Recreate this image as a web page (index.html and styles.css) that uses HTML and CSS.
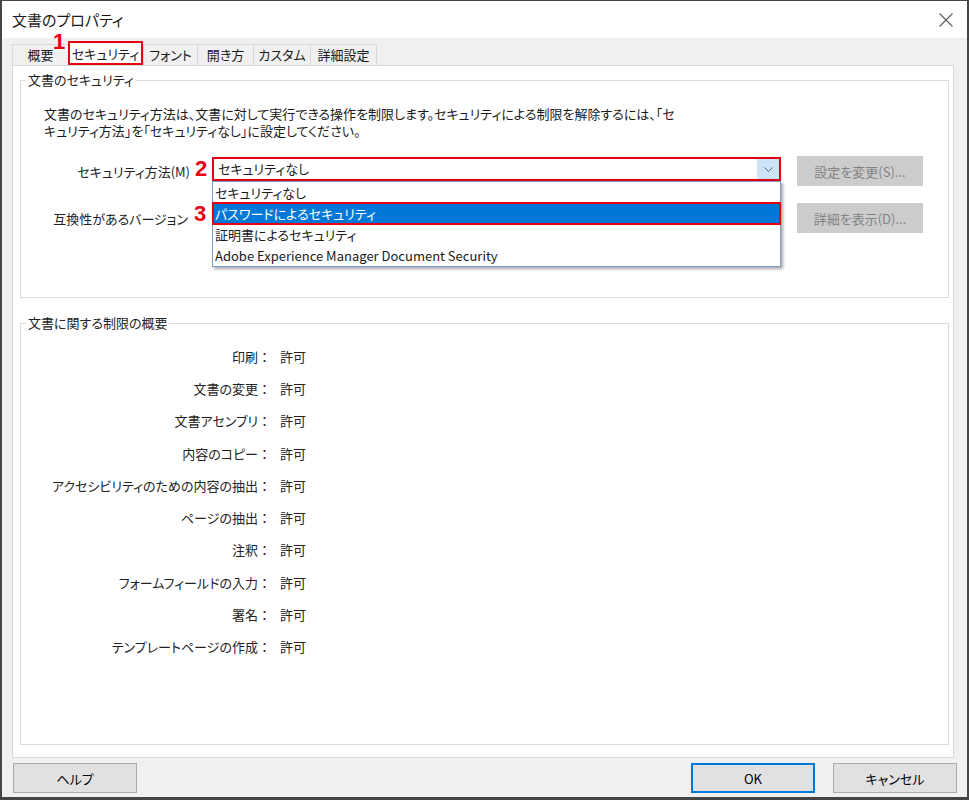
FILE: index.html
```html
<!DOCTYPE html>
<html lang="ja">
<head>
<meta charset="utf-8">
<title>文書のプロパティ</title>
<link rel="stylesheet" href="styles.css">
</head>
<body>
<div class="window">
  <div class="titlebar">
    <span class="title">文書のプロパティ</span>
    <svg class="close" width="14" height="14" viewBox="0 0 14 14"><path d="M0.5 0.5 L13.5 13.5 M13.5 0.5 L0.5 13.5" stroke="#5a5a5a" stroke-width="1.1" fill="none"/></svg>
  </div>
  <div class="tabs">
    <div class="tab tab-w1">概要</div>
    <div class="tab tab-w2 active"><span class="mark mark-1">1</span>セキュリティ</div>
    <div class="tab tab-w3">フォント</div>
    <div class="tab tab-w4">開き方</div>
    <div class="tab tab-w5">カスタム</div>
    <div class="tab tab-w6">詳細設定</div>
  </div>
  <div class="panel">
    <fieldset class="group group-security">
      <legend>文書のセキュリティ</legend>
      <p class="desc">文書のセキュリティ方法は、文書に対して実行できる操作を制限します。セキュリティによる制限を解除するには、「セ<br>キュリティ方法」を「セキュリティなし」に設定してください。</p>
      <div class="form-row">
        <span class="row-label">セキュリティ方法(M)</span>
        <span class="mark-slot"><span class="mark mark-2">2</span></span>
        <div class="combo combo-focus">
          <span class="combo-value">セキュリティなし</span>
          <span class="combo-arrow"><svg width="9" height="5" viewBox="0 0 9 5"><path d="M0.5 0.5 L4.5 4.5 L8.5 0.5" stroke="#606060" stroke-width="1" fill="none"/></svg></span>
          <ul class="dropdown">
            <li class="option">セキュリティなし</li>
            <li class="option selected"><span class="mark mark-3">3</span>パスワードによるセキュリティ</li>
            <li class="option">証明書によるセキュリティ</li>
            <li class="option">Adobe Experience Manager Document Security</li>
          </ul>
        </div>
        <button class="btn-disabled" disabled>設定を変更(S)...</button>
      </div>
      <div class="form-row">
        <span class="row-label row-label-2">互換性があるバージョン</span>
        <span class="mark-slot"></span>
        <div class="combo"></div>
        <button class="btn-disabled" disabled>詳細を表示(D)...</button>
      </div>
    </fieldset>
    <fieldset class="group group-summary">
      <legend>文書に関する制限の概要</legend>
      <div class="summary">
        <div class="sum-row"><span class="sum-label">印刷<span class="colon">：</span></span><span class="sum-value">許可</span></div>
        <div class="sum-row"><span class="sum-label">文書の変更<span class="colon">：</span></span><span class="sum-value">許可</span></div>
        <div class="sum-row"><span class="sum-label">文書アセンブリ<span class="colon">：</span></span><span class="sum-value">許可</span></div>
        <div class="sum-row"><span class="sum-label">内容のコピー<span class="colon">：</span></span><span class="sum-value">許可</span></div>
        <div class="sum-row"><span class="sum-label">アクセシビリティのための内容の抽出<span class="colon">：</span></span><span class="sum-value">許可</span></div>
        <div class="sum-row"><span class="sum-label">ページの抽出<span class="colon">：</span></span><span class="sum-value">許可</span></div>
        <div class="sum-row"><span class="sum-label">注釈<span class="colon">：</span></span><span class="sum-value">許可</span></div>
        <div class="sum-row"><span class="sum-label">フォームフィールドの入力<span class="colon">：</span></span><span class="sum-value">許可</span></div>
        <div class="sum-row"><span class="sum-label">署名<span class="colon">：</span></span><span class="sum-value">許可</span></div>
        <div class="sum-row"><span class="sum-label">テンプレートページの作成<span class="colon">：</span></span><span class="sum-value">許可</span></div>
      </div>
    </fieldset>
  </div>
  <div class="footer">
    <button class="btn">ヘルプ</button>
    <div class="footer-right">
      <button class="btn btn-default">OK</button>
      <button class="btn">キャンセル</button>
    </div>
  </div>
</div>
</body>
</html>
```
FILE: styles.css
```css
body {
  margin: 0;
  background: #3c3c3c;
  font-family: "Noto Sans CJK JP", "Noto Sans", sans-serif;
  font-feature-settings: "palt";
  font-size: 13px;
  color: #1a1a1a;
}

.window {
  width: 969px;
  height: 800px;
  box-sizing: border-box;
  border-style: solid;
  border-color: #454545;
  border-width: 1px 2px 3px 2px;
  background: #f0f0f0;
  display: flex;
  flex-direction: column;
}

.titlebar {
  flex: none;
  height: 37px;
  background: #fff;
  display: flex;
  align-items: center;
  justify-content: space-between;
  padding: 0 14px 0 10px;
}

.title {
  font-size: 15px;
}

.tabs {
  flex: none;
  height: 27px;
  display: flex;
  align-items: flex-end;
  padding-left: 10px;
}

.tab {
  box-sizing: border-box;
  height: 21px;
  padding-bottom: 1px;
  border: 1px solid #d9d9d9;
  border-bottom: none;
  margin-right: -1px;
  display: flex;
  align-items: center;
  justify-content: center;
  background: #f0f0f0;
  white-space: nowrap;
}

.tab-w1 { width: 57px; }
.tab-w2 { width: 75px; }
.tab-w3 { width: 55px; }
.tab-w4 { width: 57px; }
.tab-w5 { width: 58px; }
.tab-w6 { width: 67px; }

.tab.active {
  position: relative;
  height: 24px;
  padding-bottom: 0;
  background: #fff;
  border: none;
  outline: 2px solid #e60012;
  outline-offset: -2px;
  z-index: 2;
  margin-right: 0;
}

.mark {
  font-family: "Liberation Sans", Arial, sans-serif;
  font-weight: bold;
  font-size: 22px;
  line-height: 1;
  color: #e60012;
}

.mark-1 {
  position: absolute;
  left: -15px;
  top: -10px;
}

.panel {
  flex: none;
  height: 693px;
  box-sizing: border-box;
  margin: 0 13px 0 10px;
  background: #fff;
  border: 1px solid #d9d9d9;
  padding: 5px 4px 12px 7px;
  display: flex;
  flex-direction: column;
}

fieldset.group {
  margin: 0;
  padding: 0;
  border: 1px solid #dcdcdc;
  min-width: 0;
}

.group legend {
  margin-left: 5px;
  padding: 0 2px;
  line-height: 18px;
  font-size: 13px;
  color: #222;
}

fieldset.group-security {
  flex: none;
  padding-bottom: 64px;
}

.desc {
  margin: 16px 0 0 23px;
  line-height: 17px;
  white-space: nowrap;
}

.form-row {
  display: flex;
  align-items: center;
  height: 30px;
  margin-top: 17px;
}

.row-label {
  flex: none;
  width: 169px;
  text-align: right;
  white-space: nowrap;
  color: #222;
}

.row-label-2 {
  padding-right: 2px;
  box-sizing: border-box;
}

.mark-slot {
  flex: none;
  width: 22px;
  display: flex;
  justify-content: center;
}

.mark-2 {
  position: relative;
  top: -2px;
}

.combo {
  flex: none;
  position: relative;
  box-sizing: border-box;
  width: 569px;
  height: 24px;
  border: 1px solid #7a7a7a;
  background: #fff;
  align-self: flex-start;
  margin-top: 1px;
}

.combo-focus {
  border: 2px solid #e60012;
}

.combo-value {
  display: block;
  line-height: 20px;
  padding-left: 4px;
}

.combo-arrow {
  position: absolute;
  right: 0;
  top: 0;
  bottom: 0;
  width: 22px;
  background: #cce4f7;
  display: flex;
  align-items: center;
  justify-content: center;
}

.dropdown {
  position: absolute;
  z-index: 10;
  top: calc(100% + 2px);
  left: -2px;
  right: -2px;
  margin: 0;
  padding: 0;
  list-style: none;
  background: #fff;
  border: 1px solid #7f9dc9;
  box-shadow: 2px 2px 3px rgba(0, 0, 0, 0.35);
}

.option {
  position: relative;
  height: 21px;
  line-height: 21px;
  padding-left: 2px;
  white-space: nowrap;
}

.option.selected {
  background: #0078d7;
  color: #fff;
  outline: 2px solid #e60012;
  outline-offset: -1px;
}

.mark-3 {
  position: absolute;
  left: -19px;
  top: 0;
  line-height: 21px;
}

.btn-disabled {
  flex: none;
  margin-left: 16px;
  width: 126px;
  height: 30px;
  background: #cccccc;
  border: 1px solid #cccccc;
  color: #838383;
  font-family: inherit;
  font-feature-settings: "palt";
  font-size: 13px;
  padding: 0;
}

fieldset.group-summary {
  flex: 1;
  margin-top: 16px;
}

.summary {
  margin-top: 8px;
}

.sum-row {
  display: grid;
  grid-template-columns: 250px auto;
  column-gap: 9px;
  height: 32.3px;
  align-items: center;
  color: #222;
}

.sum-label {
  text-align: right;
  white-space: nowrap;
}

.colon {
  font-feature-settings: normal;
}

.footer {
  flex: 1;
  display: flex;
  justify-content: space-between;
  align-items: flex-start;
  padding: 5px 10px 0 11px;
}

.footer-right {
  display: flex;
  gap: 18px;
}

.btn {
  box-sizing: border-box;
  width: 124px;
  height: 30px;
  background: #e1e1e1;
  border: 1px solid #adadad;
  font-family: inherit;
  font-feature-settings: "palt";
  font-size: 13px;
  color: #000;
  padding: 0;
}

.btn-default {
  border: 1px solid #0078d7;
  box-shadow: inset 0 0 0 1px #0078d7;
}
```
